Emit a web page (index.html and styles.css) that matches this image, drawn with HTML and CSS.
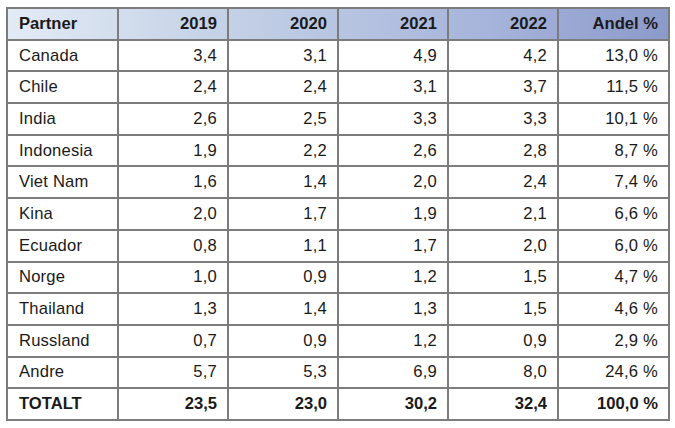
FILE: index.html
```html
<!DOCTYPE html>
<html lang="no">
<head>
<meta charset="utf-8">
<link rel="stylesheet" href="styles.css">
</head>
<body>
<table class="trade">
  <colgroup>
    <col class="c-partner"><col class="c-num"><col class="c-num"><col class="c-num"><col class="c-num"><col class="c-share">
  </colgroup>
  <thead>
    <tr class="head"><th class="name">Partner</th><th>2019</th><th>2020</th><th>2021</th><th>2022</th><th>Andel %</th></tr>
  </thead>
  <tbody>
    <tr><td class="name">Canada</td><td>3,4</td><td>3,1</td><td>4,9</td><td>4,2</td><td>13,0 %</td></tr>
    <tr><td class="name">Chile</td><td>2,4</td><td>2,4</td><td>3,1</td><td>3,7</td><td>11,5 %</td></tr>
    <tr><td class="name">India</td><td>2,6</td><td>2,5</td><td>3,3</td><td>3,3</td><td>10,1 %</td></tr>
    <tr><td class="name">Indonesia</td><td>1,9</td><td>2,2</td><td>2,6</td><td>2,8</td><td>8,7 %</td></tr>
    <tr><td class="name">Viet Nam</td><td>1,6</td><td>1,4</td><td>2,0</td><td>2,4</td><td>7,4 %</td></tr>
    <tr><td class="name">Kina</td><td>2,0</td><td>1,7</td><td>1,9</td><td>2,1</td><td>6,6 %</td></tr>
    <tr><td class="name">Ecuador</td><td>0,8</td><td>1,1</td><td>1,7</td><td>2,0</td><td>6,0 %</td></tr>
    <tr><td class="name">Norge</td><td>1,0</td><td>0,9</td><td>1,2</td><td>1,5</td><td>4,7 %</td></tr>
    <tr><td class="name">Thailand</td><td>1,3</td><td>1,4</td><td>1,3</td><td>1,5</td><td>4,6 %</td></tr>
    <tr><td class="name">Russland</td><td>0,7</td><td>0,9</td><td>1,2</td><td>0,9</td><td>2,9 %</td></tr>
    <tr><td class="name">Andre</td><td>5,7</td><td>5,3</td><td>6,9</td><td>8,0</td><td>24,6 %</td></tr>
    <tr class="total"><td class="name">TOTALT</td><td>23,5</td><td>23,0</td><td>30,2</td><td>32,4</td><td>100,0 %</td></tr>
  </tbody>
</table>
</body>
</html>
```
FILE: styles.css
```css
html, body {
  margin: 0;
  padding: 0;
  background: #ffffff;
}

body {
  font-family: "Liberation Sans", Arial, sans-serif;
  color: #1a1a1a;
}

.trade {
  margin: 7px 0 0 6px;
  width: 662px;
  border-collapse: collapse;
  table-layout: fixed;
  font-size: 16.6px;
}

.trade tr {
  height: 31.7px;
}

.c-partner { width: 111px; }
.c-num { width: 110px; }
.c-share { width: 111px; }

.trade th,
.trade td {
  border: 2px solid #7c7c7c;
  padding: 0 10px 0 11px;
  text-align: right;
  line-height: 18px;
  white-space: nowrap;
}

.trade td {
  letter-spacing: 0.2px;
}

.trade .name {
  text-align: left;
}

.head {
  background: linear-gradient(to right, #e3ebf5 0%, #c6d3e7 30%, #a9b6dc 70%, #8c9acb 100%);
}

.head th {
  font-weight: bold;
  color: #1a1a1a;
}

.total td {
  font-weight: bold;
  letter-spacing: 0;
}
```
